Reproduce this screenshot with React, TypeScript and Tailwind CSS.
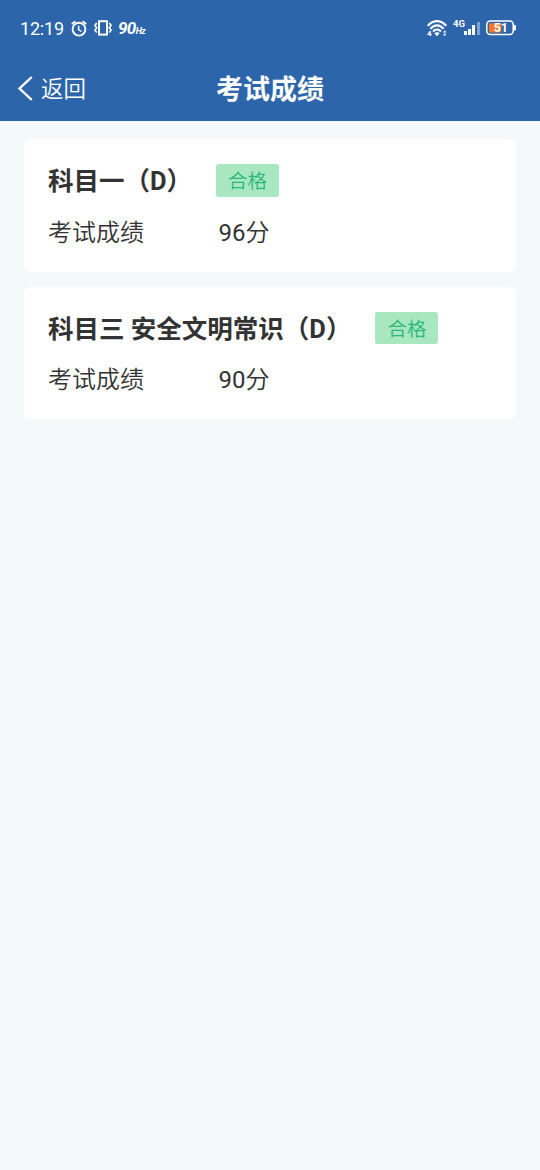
const results = [
  { id: 'subject-1', title: '科目一（D）', status: '合格', score: 96 },
  { id: 'subject-3', title: '科目三 安全文明常识（D）', status: '合格', score: 90 },
];

function AlarmIcon() {
  return (
    <svg className="w-4 h-[17px]" viewBox="0 0 16 17" fill="none" stroke="currentColor">
      <circle cx="8" cy="9.2" r="6.4" strokeWidth="1.9" />
      <path d="M0.8 4L4.4 1.2M15.2 4L11.6 1.2" strokeWidth="1.8" />
      <path d="M7.6 5.8v3.8l2.8 1.9" strokeWidth="1.5" />
    </svg>
  );
}

function VibrateIcon() {
  return (
    <svg className="w-[18px] h-4" viewBox="0 0 18 16" fill="none" stroke="currentColor">
      <rect x="5" y="1.2" width="8" height="13.4" strokeWidth="2" />
      <path d="M2.7 3L0.9 5.4l1.8 2.4-1.8 2.4 1.8 2.4" strokeWidth="1.6" />
      <path d="M15.3 3l1.8 2.4-1.8 2.4 1.8 2.4-1.8 2.4" strokeWidth="1.6" />
    </svg>
  );
}

function WifiIcon() {
  return (
    <svg className="w-5 h-[17px]" viewBox="0 0 20 17" fill="none" stroke="currentColor">
      <path d="M0.8 5.8C6 -0.5 14 -0.5 19.2 5.8" strokeWidth="2.2" />
      <path d="M3.5 8.9C7.3 4.2 12.7 4.2 16.5 8.9" strokeWidth="2.2" />
      <path d="M6 11.5c2.3-2.7 5.7-2.7 8 0" strokeWidth="2" />
      <path d="M7.3 13.2c1.3-1.3 4.1-1.3 5.4 0L10 16.2z" fill="currentColor" stroke="none" />
      <text
        x="0"
        y="16.2"
        fontSize="8"
        fontWeight="700"
        fill="currentColor"
        stroke="none"
        className="font-['Roboto',sans-serif]"
      >
        4
      </text>
      <path d="M16 12.6l1.7-2.4 1.7 2.4zM16 13.8h3.4l-1.7 2.4z" fill="currentColor" stroke="none" />
    </svg>
  );
}

function SignalIcon() {
  return (
    <svg className="w-4 h-[13px]" viewBox="0 0 16 13" fill="currentColor">
      <rect x="0" y="9" width="3" height="4" />
      <rect x="4" y="7" width="3" height="6" />
      <rect x="8" y="3" width="3" height="10" />
      <rect x="13" y="0" width="3" height="13" opacity="0.4" />
    </svg>
  );
}

function BatteryIcon() {
  return (
    <svg className="w-[30px] h-4" viewBox="0 0 30 16" fill="none">
      <rect x="0.8" y="1" width="26.4" height="13.6" rx="3.5" stroke="currentColor" strokeWidth="1.5" />
      <path d="M28 5h1a1 1 0 0 1 1 1v3.6a1 1 0 0 1-1 1h-1z" fill="currentColor" />
      <rect x="3" y="3.2" width="12.5" height="9.2" rx="1" fill="#f4772a" />
      <text
        x="14.8"
        y="12.2"
        fontSize="12.5"
        fontWeight="700"
        textAnchor="middle"
        fill="currentColor"
        className="font-['Roboto',sans-serif]"
      >
        51
      </text>
    </svg>
  );
}

function StatusBar() {
  return (
    <div className="flex h-14 items-center justify-between pl-5 pr-6">
      <div className="flex items-center">
        <span className="w-[51px] pt-px text-[18px] leading-none tracking-[-0.2px]">12:19</span>
        <AlarmIcon />
        <div className="w-[7px]" />
        <VibrateIcon />
        <span className="ml-[6px] text-[17px] font-bold italic leading-none tracking-[-0.6px]">
          90<span className="text-[9px]">Hz</span>
        </span>
      </div>
      <div className="flex items-center">
        <WifiIcon />
        <span className="-mt-[9px] ml-[6px] w-[12px] text-[9.5px] font-bold leading-none">4G</span>
        <div className="-ml-[1px] mt-[1px]">
          <SignalIcon />
        </div>
        <div className="ml-[6px]">
          <BatteryIcon />
        </div>
      </div>
    </div>
  );
}

function NavBar() {
  return (
    <div className="grid h-[65px] grid-cols-3 items-center">
      <button className="flex items-center gap-2 pl-[18px] text-[22.5px] font-[350] leading-none">
        <svg className="h-[25px] w-[15px]" viewBox="0 0 15 25" fill="none" stroke="currentColor">
          <path d="M13.8 1L1.6 12.5l12.2 11.5" strokeWidth="2.4" />
        </svg>
        <span className="pt-px">返回</span>
      </button>
      <h1 className="pt-[3px] text-center text-[27px] font-bold leading-none">考试成绩</h1>
    </div>
  );
}

export default function App() {
  return (
    <div
      lang="zh-CN"
      className="min-h-screen bg-[#f4f9fa] font-['Roboto','Noto_Sans_CJK_SC',sans-serif] text-[#333333]"
    >
      <header className="h-[121px] bg-[#2c65aa] text-white">
        <StatusBar />
        <NavBar />
      </header>

      <main className="flex flex-col gap-[15px] px-6 pt-[18px]">
        {results.map((item) => (
          <section key={item.id} className="h-[132.5px] rounded-md bg-white px-6 pt-[25px]">
            <div className="flex h-[32.5px] items-center gap-6">
              <h2 className="whitespace-nowrap pt-[3px] text-[25.5px] font-bold leading-none">{item.title}</h2>
              <span className="flex h-[32.5px] w-[63px] items-center justify-center rounded-[3px] bg-[#a8e7c0] pt-[3px] text-[19.5px] font-[350] leading-none text-[#2bb67a]">
                {item.status}
              </span>
            </div>
            <div className="mt-[18px] flex h-9 items-center text-2xl font-[350] leading-none">
              <span className="w-[170.5px]">考试成绩</span>
              <span>
                <span className="font-normal">{item.score}</span>分
              </span>
            </div>
          </section>
        ))}
      </main>
    </div>
  );
}
